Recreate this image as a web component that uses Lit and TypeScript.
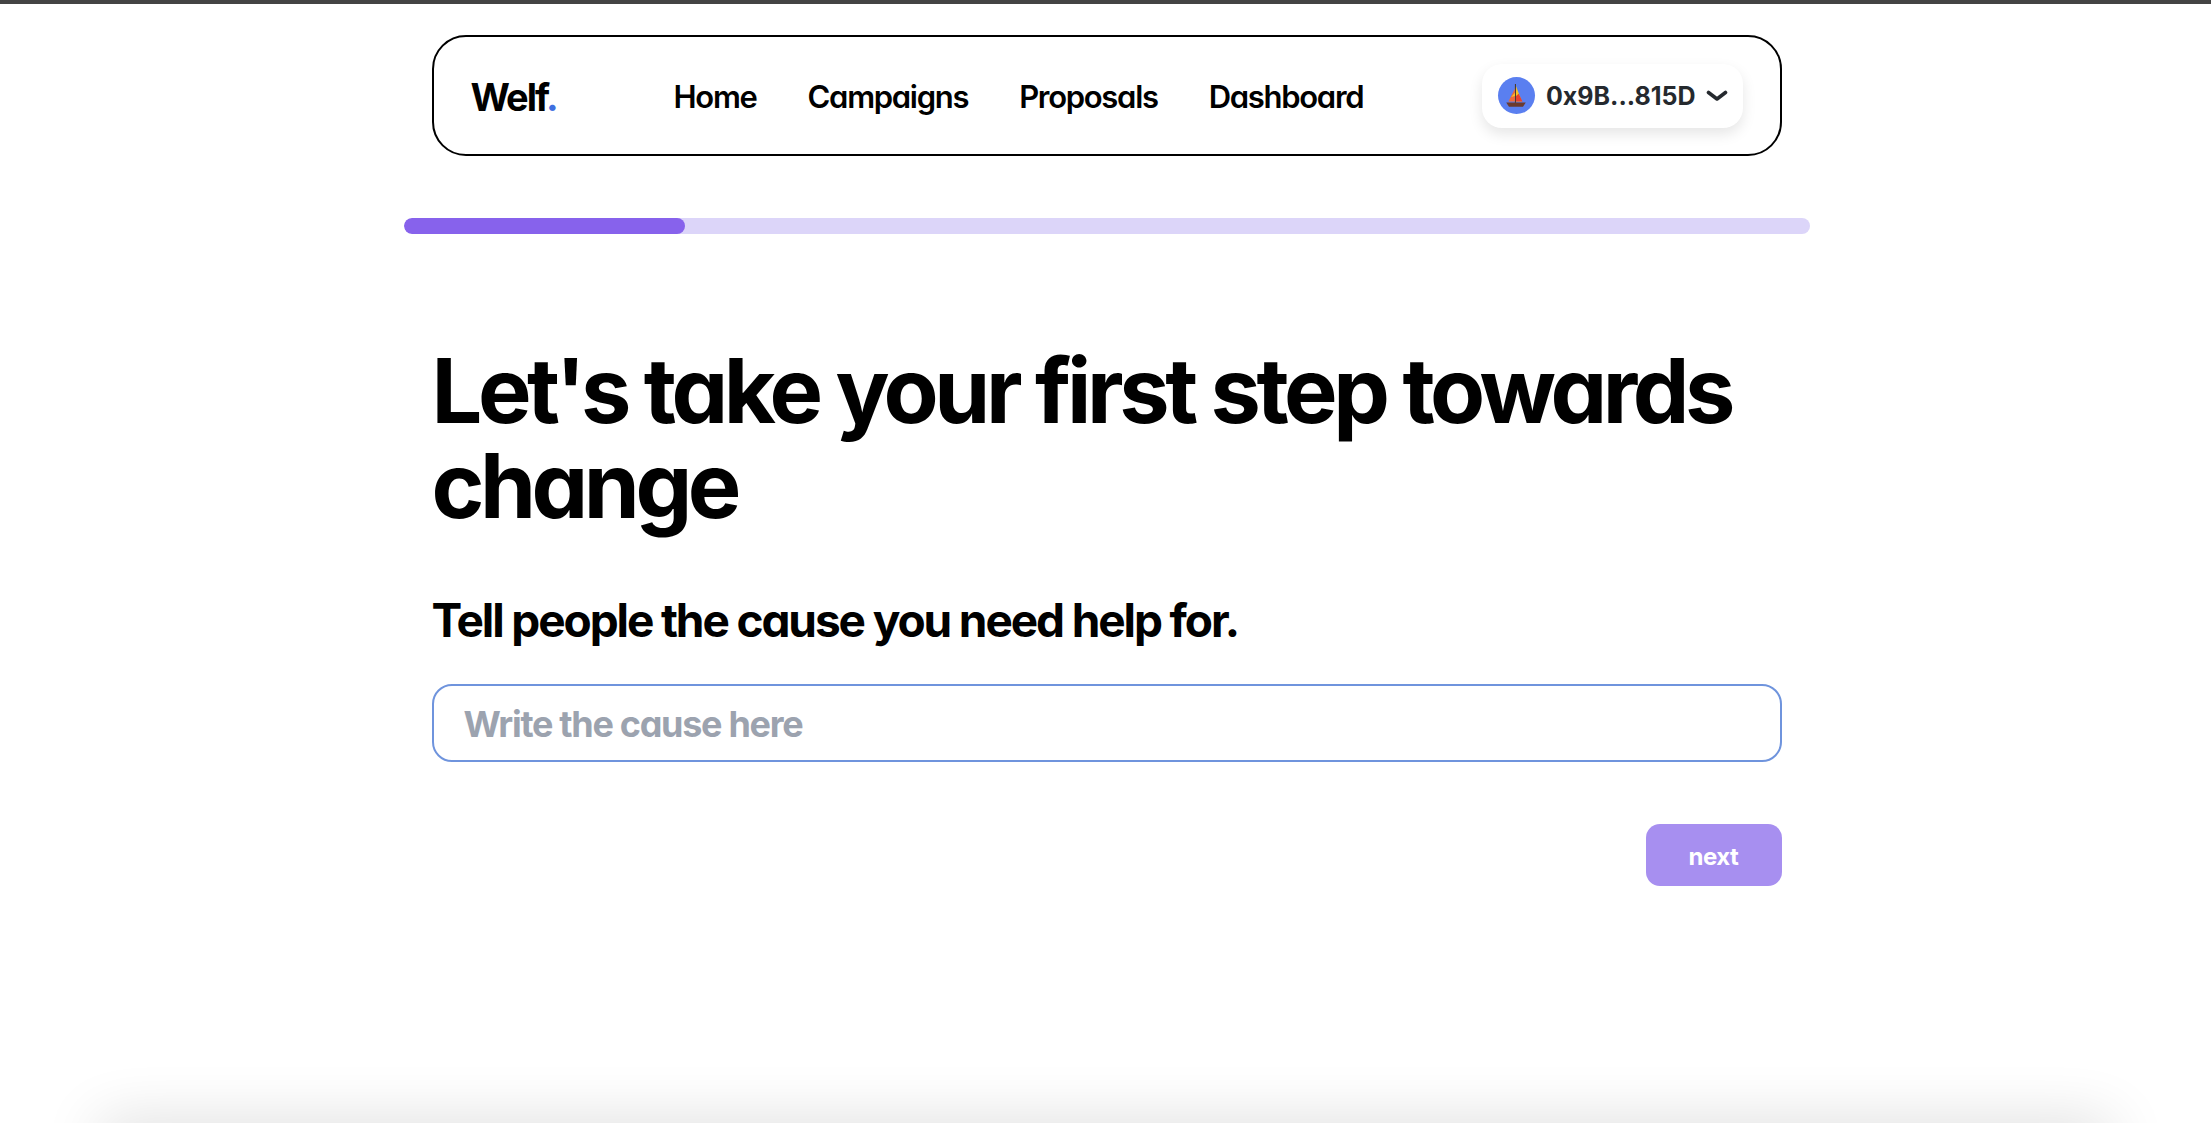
import { LitElement, html, css } from "lit";
import { customElement } from "lit/decorators.js";

const links = ["Home", "Campaigns", "Proposals", "Dashboard"];

@customElement("app-root")
export class AppRoot extends LitElement {
  static styles = css`
    :host {
      display: block;
      font-family: Inter, "Liberation Sans", sans-serif;
      font-feature-settings: "cv11" 1;
      color: #000;
    }
    .page {
      position: relative;
      height: 1123px;
      overflow: hidden;
      background: #fff;
      border-top: 4px solid #444;
      box-sizing: border-box;
      padding-left: 2px;
      display: flex;
      flex-direction: column;
      align-items: center;
    }
    .shadow {
      position: absolute;
      top: 100%;
      left: 100px;
      right: 100px;
      height: 40px;
      box-shadow: 0 0 60px rgba(0, 0, 0, 0.16);
    }
    .column {
      width: 1350px;
      display: flex;
      flex-direction: column;
    }
    nav {
      margin-top: 31px;
      height: 121px;
      box-sizing: border-box;
      border: 2px solid #000;
      border-radius: 34px;
      display: flex;
      align-items: center;
      padding: 0 37px;
    }
    .logo {
      font-size: 38px;
      font-weight: 700;
      letter-spacing: -2px;
      width: 203px;
      padding-top: 2px;
    }
    .logo span {
      color: #3f6fe0;
    }
    .links {
      display: flex;
      gap: 51px;
      flex: 1;
      padding-top: 2px;
    }
    .links a {
      font-size: 31px;
      font-weight: 600;
      letter-spacing: -1.3px;
    }
    .wallet {
      display: flex;
      align-items: center;
      gap: 10px;
      height: 64px;
      padding: 0 15px 0 16px;
      border-radius: 20px;
      background: #fff;
      box-shadow: 0 6px 14px rgba(0, 0, 0, 0.1);
      font-size: 25px;
      font-weight: 700;
      color: #25292e;
      font-feature-settings: normal;
    }
    .address {
      margin-left: 1px;
    }
    .avatar {
      width: 37px;
      height: 37px;
      border-radius: 50%;
      background: #5a7ff0;
      display: flex;
      align-items: center;
      justify-content: center;
    }
    .progress {
      margin-top: 62px;
      width: 1406px;
      height: 16px;
      border-radius: 8px;
      background: #dcd5f9;
      overflow: hidden;
    }
    .progress div {
      width: 281px;
      height: 100%;
      border-radius: 8px;
      background: #8762ec;
    }
    h1 {
      margin: 109px 0 0;
      font-size: 90px;
      line-height: 95px;
      font-weight: 700;
      letter-spacing: -4.45px;
    }
    h2 {
      margin: 59px 0 0;
      font-size: 46px;
      line-height: 56px;
      font-weight: 700;
      letter-spacing: -2.1px;
    }
    input {
      margin-top: 36px;
      height: 78px;
      box-sizing: border-box;
      width: 100%;
      border: 2px solid #6f94dd;
      border-radius: 20px;
      padding: 2px 30px 0;
      font: 700 36px Inter, "Liberation Sans", sans-serif;
      font-feature-settings: "cv11" 1;
      letter-spacing: -1.3px;
      outline: none;
    }
    input::placeholder {
      color: #9ca3af;
      opacity: 1;
    }
    .actions {
      margin-top: 62px;
      display: flex;
      justify-content: flex-end;
    }
    button {
      width: 136px;
      height: 62px;
      border: none;
      border-radius: 14px;
      background: #a78ff0;
      color: #fff;
      padding: 3px 0 0;
      font: 700 24px Inter, "Liberation Sans", sans-serif;
      letter-spacing: -0.5px;
    }
  `;

  render() {
    return html`
      <div class="page">
        <div class="column">
          <nav>
            <div class="logo">Welf<span>.</span></div>
            <div class="links">${links.map((l) => html`<a>${l}</a>`)}</div>
            <div class="wallet">
              <div class="avatar">
                <svg width="24" height="26" viewBox="0 0 22 24">
                  <path d="M10.5 1v18" stroke="#4a3a30" stroke-width="1" />
                  <path d="M11 3l5.5 14H11z" fill="#f7c325" />
                  <path d="M13.5 10l3.5 7h-6v-5z" fill="#e8402e" />
                  <path d="M10 5L4 17h6z" fill="#f0683a" />
                  <path d="M10 9v3L6.5 13z" fill="#f7c325" />
                  <path d="M2 18h18l-2.5 4h-13z" fill="#6b3a2e" />
                </svg>
              </div>
              <span class="address">0x9B...815D</span>
              <svg width="22" height="12" viewBox="0 0 22 12" fill="none">
                <path d="M2.5 2.5L11 9l8.5-6.5" stroke="#25292e" stroke-width="3.6" stroke-linecap="round" stroke-linejoin="round" />
              </svg>
            </div>
          </nav>
        </div>
        <div class="progress"><div></div></div>
        <div class="column">
          <h1>Let's take your first step towards change</h1>
          <h2>Tell people the cause you need help for.</h2>
          <input placeholder="Write the cause here" />
          <div class="actions"><button>next</button></div>
        </div>
        <div class="shadow"></div>
      </div>
    `;
  }
}
